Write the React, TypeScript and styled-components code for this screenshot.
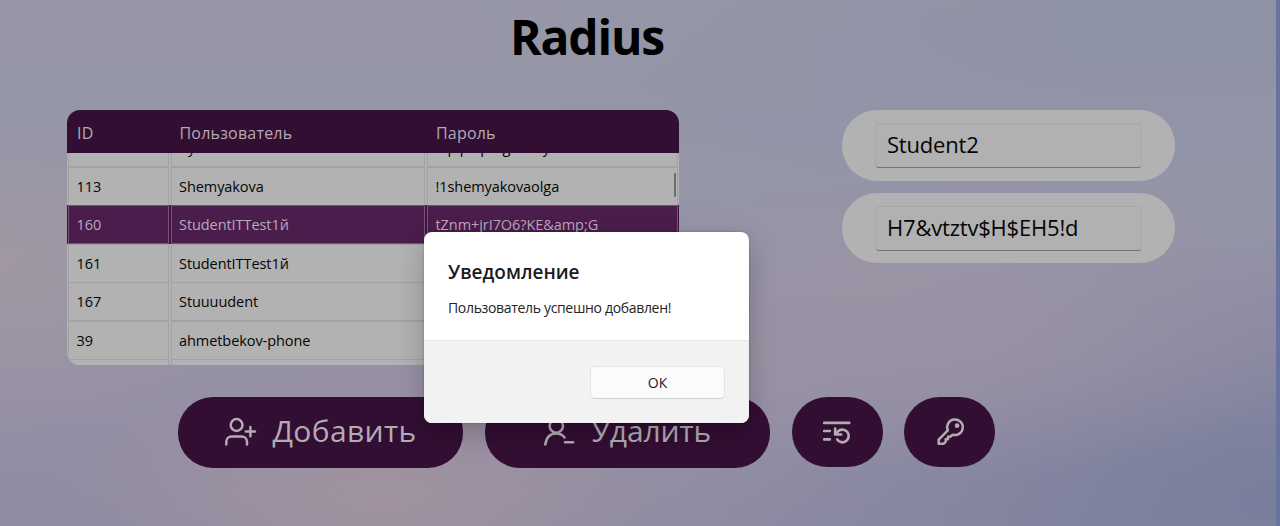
import React from "react";
import styled, { createGlobalStyle } from "styled-components";

const GlobalStyle = createGlobalStyle`
  * { box-sizing: border-box; }
  body { margin: 0; overflow: hidden; font-family: "Open Sans", "Noto Sans", sans-serif; }
`;

const Window = styled.div`
  position: relative;
  width: 1280px;
  height: 526px;
  overflow: hidden;
  border-right: 4px solid #6973a0;
  background:
    radial-gradient(ellipse 330px 130px at 380px 500px, rgba(164, 148, 159, 0.85), rgba(164, 148, 159, 0) 100%),
    radial-gradient(ellipse 260px 170px at 0px 265px, rgba(163, 152, 162, 0.8), rgba(163, 152, 162, 0) 100%),
    radial-gradient(ellipse 420px 150px at 930px 330px, rgba(156, 147, 164, 0.9), rgba(156, 147, 164, 0) 100%),
    radial-gradient(ellipse 560px 280px at 1276px 500px, rgba(120, 126, 156, 1), rgba(120, 126, 156, 0) 100%),
    radial-gradient(ellipse 700px 200px at 1180px 20px, rgba(140, 146, 165, 0.9), rgba(140, 146, 165, 0) 100%),
    linear-gradient(180deg, #9897a7 0%, #9496a8 25%, #9694a7 50%, #9690a5 75%, #8e8ba2 100%);
`;

const Page = styled.main`
  display: flex;
  flex-direction: column;
`;

const Title = styled.h1`
  margin: 0;
  width: 1174px;
  height: 110px;
  padding-top: 5px;
  text-align: center;
  font-size: 48px;
  line-height: 64px;
  font-weight: 700;
  letter-spacing: -1.2px;
  color: #000;
`;

const Content = styled.section`
  display: flex;
  justify-content: space-between;
  align-items: flex-start;
  padding: 0 101px 0 67px;
`;

const Grid = styled.div`
  display: flex;
  flex-direction: column;
  width: 612px;
  height: 254.5px;
  border-radius: 13px;
  overflow: hidden;
  background: #b2b2b2;
`;

const columns = "102.5px 256.5px 1fr";

const GridHead = styled.div`
  display: grid;
  grid-template-columns: ${columns};
  flex: none;
  height: 43px;
  background: #320e33;
`;

const HeadCell = styled.div`
  padding: 2px 0 0 10px;
  font-size: 16px;
  line-height: 43px;
  letter-spacing: 0.2px;
  color: #b3abb4;
`;

const GridBody = styled.div`
  position: relative;
  display: flex;
  flex: 1;
  flex-direction: column;
  justify-content: flex-start;
  overflow: hidden;
`;

const Rows = styled.div`
  margin-top: -24.4px;
`;

const Row = styled.div<{ $selected?: boolean }>`
  display: grid;
  grid-template-columns: ${columns};
  height: 38.4px;
  background: ${(p) => (p.$selected ? "#3d153e" : "#b2b2b2")};
  color: ${(p) => (p.$selected ? "#b9a8ba" : "#050505")};

  & > div {
    border-color: ${(p) => (p.$selected ? "#755377" : "#a2a2a2")};
    background: ${(p) => (p.$selected ? "#4b1d4c" : "#b2b2b2")};
  }

  &:first-child > div {
    line-height: 33px;
  }
`;

const Cell = styled.div`
  margin: 0 1px;
  border: 1px solid;
  padding: 1px 0 0 7.5px;
  font-size: 14.5px;
  line-height: 36px;
  letter-spacing: -0.07px;
  white-space: nowrap;
`;

const Scrollbar = styled.div`
  position: absolute;
  top: 20px;
  right: 3px;
  width: 2px;
  height: 24px;
  border-radius: 1px;
  background: #6c6c6c;
`;

const Fields = styled.div`
  display: flex;
  flex-direction: column;
  gap: 12px;
`;

const Pill = styled.label`
  display: flex;
  align-items: center;
  justify-content: center;
  width: 333px;
  height: 70.7px;
  border-radius: 35px;
  background: #b2b2b2;
`;

const Input = styled.input`
  width: 267px;
  height: 45px;
  padding: 0 11px 2px;
  border: 1px solid #a8a8a8;
  border-bottom-color: #737373;
  border-radius: 4px;
  outline: none;
  background: #b1b1b1;
  color: #050505;
  font: 22px "Open Sans", "Noto Sans", sans-serif;
  letter-spacing: -0.2px;
`;

const Actions = styled.nav`
  display: flex;
  gap: 21.8px;
  padding: 32.5px 0 0 178px;
`;

const Action = styled.button<{ $compact?: boolean }>`
  display: flex;
  align-items: center;
  justify-content: center;
  gap: 16px;
  width: ${(p) => (p.$compact ? 91 : 285)}px;
  height: ${(p) => (p.$compact ? 70 : 71)}px;
  padding: 0;
  border: 0;
  border-radius: 35px;
  background: #320e33;
  color: #b3acb3;
  font: 30px/40px "Open Sans", "Noto Sans", sans-serif;

  svg { flex: none; fill: none; stroke: currentColor; stroke-linecap: round; stroke-linejoin: round; }
`;

const ActionText = styled.span<{ $spacing: number }>`
  position: relative;
  top: -2px;
  letter-spacing: ${(p) => p.$spacing}px;
`;

const Dialog = styled.div`
  position: absolute;
  left: 424px;
  top: 232px;
  display: flex;
  flex-direction: column;
  width: 325px;
  height: 191px;
  overflow: hidden;
  border-radius: 8px;
  background: #fff;
  box-shadow: 0 0 2px rgba(0, 0, 0, 0.3), 0 10px 28px rgba(0, 0, 0, 0.22);
`;

const DialogBody = styled.div`
  flex: 1;
  padding: 26px 24px 0;
`;

const DialogTitle = styled.h2`
  margin: 0;
  font-size: 19px;
  line-height: 28px;
  font-weight: 600;
  color: #1b1b1b;
`;

const DialogText = styled.p`
  margin: 12px 0 0;
  font-size: 14px;
  line-height: 20px;
  letter-spacing: -0.33px;
  white-space: nowrap;
  color: #242424;
`;

const DialogFooter = styled.div`
  display: flex;
  justify-content: flex-end;
  height: 83px;
  padding: 25px 24px 0;
  border-top: 1px solid #e6e6e6;
  background: #f2f2f2;
`;

const OkButton = styled.button`
  width: 135px;
  height: 33px;
  padding: 0;
  border: 1px solid #e4e4e4;
  border-bottom-color: #cecece;
  border-radius: 5px;
  background: #fbfbfb;
  color: #1b1b1b;
  font: 14px "Open Sans", "Noto Sans", sans-serif;
`;

const users = [
  { id: "", name: "Ay", password: "!1pipaipmgnovay" },
  { id: "113", name: "Shemyakova", password: "!1shemyakovaolga" },
  { id: "160", name: "StudentITTest1й", password: "tZnm+jrI7O6?KE&amp;G", selected: true },
  { id: "161", name: "StudentITTest1й", password: "" },
  { id: "167", name: "Stuuuudent", password: "" },
  { id: "39", name: "ahmetbekov-phone", password: "" },
  { id: "", name: "", password: "" },
];

const AddUserIcon = () => (
  <svg width="32" height="32" viewBox="0 0 32 32" strokeWidth="2.5">
    <circle cx="11.6" cy="8" r="5.9" />
    <path d="M1.3 27.5v-2.7a5.2 5.2 0 0 1 5.2-5.2h10.3a5.2 5.2 0 0 1 5.2 5.2v2.7M25.4 10v9.2M20.8 14.6h9.2" />
  </svg>
);

const RemoveUserIcon = () => (
  <svg width="32" height="32" viewBox="0 0 32 32" strokeWidth="2.5">
    <circle cx="13.3" cy="9" r="6.7" />
    <path d="M2.3 27.5c1-7.2 5-11 11-11 3.5 0 6.3 1.4 8.3 4M22 25.2h8.2" />
  </svg>
);

const ResetListIcon = () => (
  <svg width="30" height="26" viewBox="0 0 30 26" strokeWidth="2.7">
    <path d="M2.2 3.9h25M2.2 12h5.6M2.2 20.4h5.6" />
    <path d="M13.2 9.5v6h6M13.5 15l3.2-3.1a6.3 6.3 0 1 1-1.5 8.6" />
  </svg>
);

const KeyIcon = () => (
  <svg width="30" height="30" viewBox="0 0 30 30" strokeWidth="2.5">
    <path d="M12.8 13.3A7.8 7.8 0 1 1 17.7 17.7l-2.7 2.1h-2v2.4h-2.3v2.6L8.5 26.8H3.7v-4.2z" />
    <circle cx="22.1" cy="8.7" r="1.1" fill="currentColor" />
  </svg>
);

export default function App() {
  return (
    <Window>
      <GlobalStyle />
      <Page>
        <Title>Radius</Title>
        <Content>
          <Grid>
            <GridHead>
              <HeadCell>ID</HeadCell>
              <HeadCell>Пользователь</HeadCell>
              <HeadCell>Пароль</HeadCell>
            </GridHead>
            <GridBody>
              <Rows>
                {users.map((u, i) => (
                  <Row key={i} $selected={u.selected}>
                    <Cell>{u.id}</Cell>
                    <Cell>{u.name}</Cell>
                    <Cell>{u.password}</Cell>
                  </Row>
                ))}
              </Rows>
              <Scrollbar />
            </GridBody>
          </Grid>
          <Fields>
            <Pill><Input defaultValue="Student2" /></Pill>
            <Pill><Input defaultValue="H7&vtztv$H$EH5!d" /></Pill>
          </Fields>
        </Content>
        <Actions>
          <Action><AddUserIcon /><ActionText $spacing={0.35}>Добавить</ActionText></Action>
          <Action><RemoveUserIcon /><ActionText $spacing={-0.1}>Удалить</ActionText></Action>
          <Action $compact><ResetListIcon /></Action>
          <Action $compact><KeyIcon /></Action>
        </Actions>
      </Page>
      <Dialog role="dialog">
        <DialogBody>
          <DialogTitle>Уведомление</DialogTitle>
          <DialogText>Пользователь успешно добавлен!</DialogText>
        </DialogBody>
        <DialogFooter><OkButton>ОК</OkButton></DialogFooter>
      </Dialog>
    </Window>
  );
}
